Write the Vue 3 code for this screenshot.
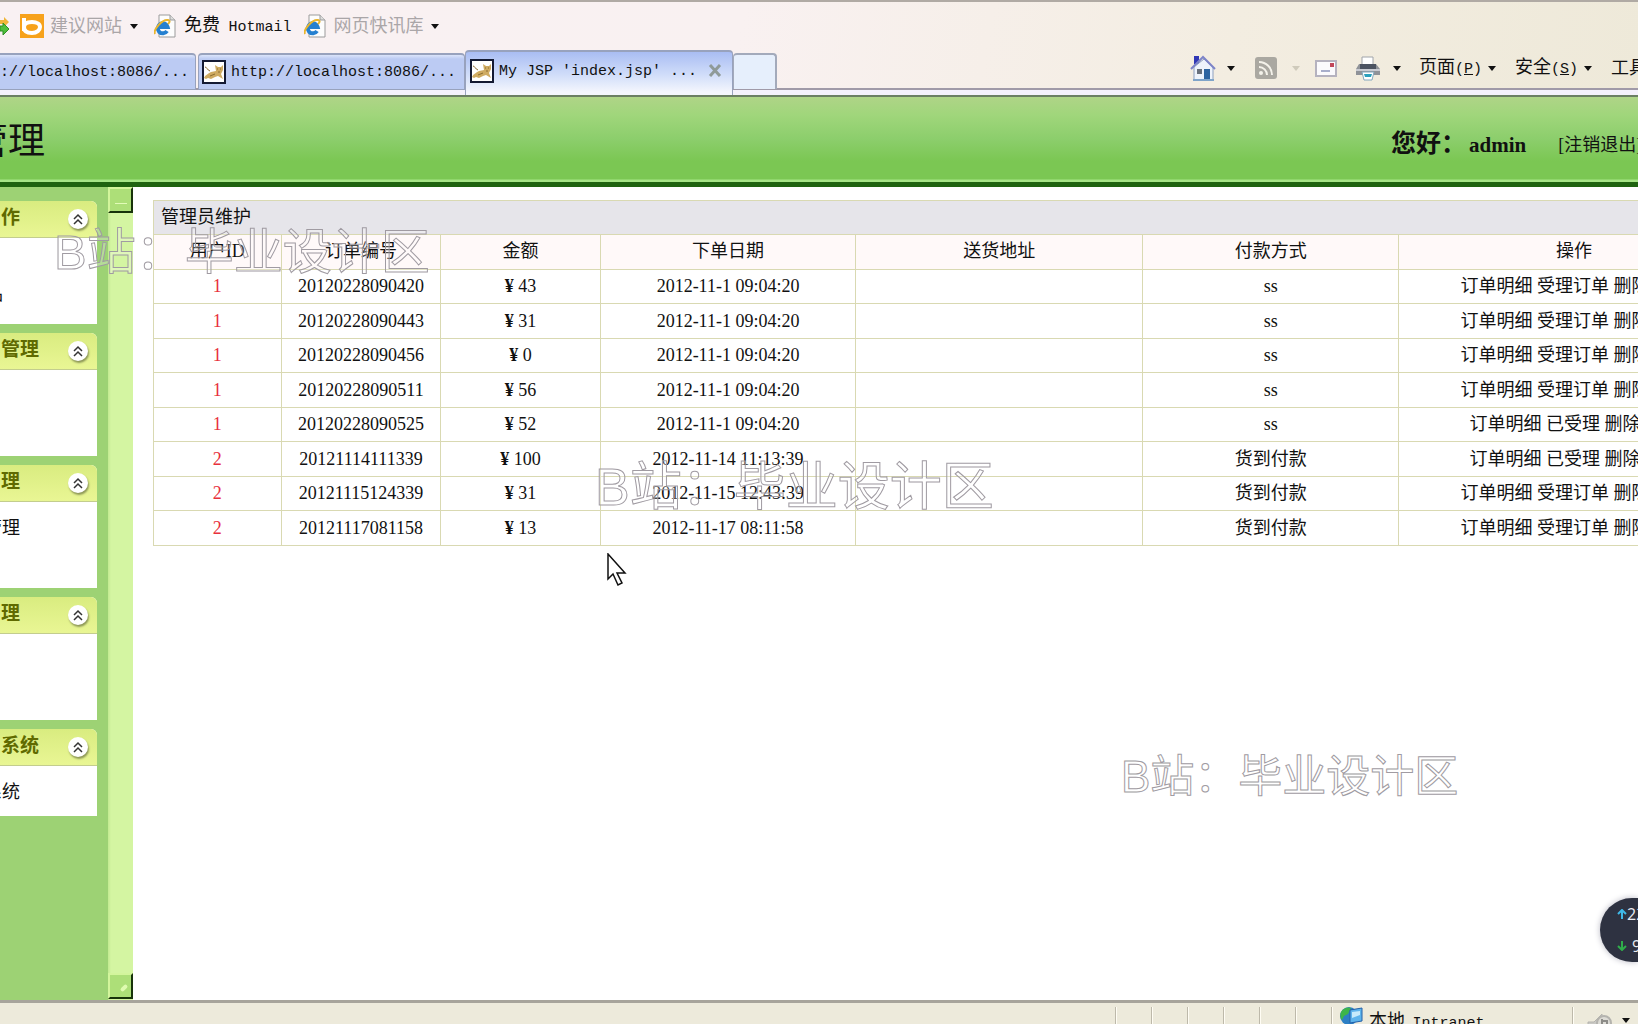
<script setup>
const tabs = [
  { text: '://localhost:8086/...', kind: 'first' },
  { text: 'http://localhost:8086/...', kind: 'second' },
  { text: "My JSP 'index.jsp' ...", kind: 'active' }
]

const panels = [
  { title: '作', item: '品', kind: 'peek' },
  { title: '管理', item: '', kind: '' },
  { title: '理', item: '管理', kind: 'near' },
  { title: '理', item: '', kind: '' },
  { title: '系统', item: '系统', kind: 'near short' }
]

const headings = ['用户ID', '订单编号', '金额', '下单日期', '送货地址', '付款方式', '操作']

const orders = [
  { user: 1, no: '20120228090420', sum: 43, date: '2012-11-1 09:04:20', pay: 'ss', action: '受理订单' },
  { user: 1, no: '20120228090443', sum: 31, date: '2012-11-1 09:04:20', pay: 'ss', action: '受理订单' },
  { user: 1, no: '20120228090456', sum: 0, date: '2012-11-1 09:04:20', pay: 'ss', action: '受理订单' },
  { user: 1, no: '20120228090511', sum: 56, date: '2012-11-1 09:04:20', pay: 'ss', action: '受理订单' },
  { user: 1, no: '20120228090525', sum: 52, date: '2012-11-1 09:04:20', pay: 'ss', action: '已受理' },
  { user: 2, no: '20121114111339', sum: 100, date: '2012-11-14 11:13:39', pay: '货到付款', action: '已受理' },
  { user: 2, no: '20121115124339', sum: 31, date: '2012-11-15 12:43:39', pay: '货到付款', action: '受理订单' },
  { user: 2, no: '20121117081158', sum: 13, date: '2012-11-17 08:11:58', pay: '货到付款', action: '受理订单' }
]
</script>

<template>
  <div class="screen">
    <div class="chrome">
      <nav class="bookmarks">
        <svg class="go" width="9" height="20" viewBox="0 0 9 20">
          <path d="M0 4h4V1l5 5-5 5V8H0z" fill="#f0b63a" />
          <path d="M0 10h3V7l6 6-6 6v-4H0z" fill="#4fbf3c" stroke="#2f8f25" />
        </svg>
        <a href="#" class="mark muted">
          <svg width="24" height="24" viewBox="0 0 24 24">
            <rect width="24" height="24" fill="#f7a21b" />
            <path d="M4 4v13M4 13c0-4 4-5 8-5 5 0 8 2 8 5s-3 6-8 6-8-2-8-6z" fill="none" stroke="#fff" stroke-width="4" stroke-linejoin="round" />
          </svg>
          <span>建议网站</span>
        </a>
        <i class="caret bing-caret"></i>
        <a href="#" class="mark hotmail">
          <svg width="24" height="24" viewBox="0 0 24 24">
            <path d="M5 1h11l5 5v17H5z" fill="#fdfdfd" stroke="#9b9b9b" />
            <path d="M16 1v5h5" fill="#ddd" stroke="#9b9b9b" />
            <path d="M13 17a5 5 0 1 1 .6-4H5" fill="none" stroke="#2580d0" stroke-width="4" />
            <path d="M1 20C-1 16 8 5 14 6c3 1 1 3 0 4" fill="none" stroke="#e9b52e" stroke-width="2" />
          </svg>
          <span>免费 <span class="mono">Hotmail</span></span>
        </a>
        <a href="#" class="mark muted">
          <svg width="24" height="24" viewBox="0 0 24 24">
            <path d="M5 1h11l5 5v17H5z" fill="#fdfdfd" stroke="#9b9b9b" />
            <path d="M16 1v5h5" fill="#ddd" stroke="#9b9b9b" />
            <path d="M13 17a5 5 0 1 1 .6-4H5" fill="none" stroke="#2580d0" stroke-width="4" />
            <path d="M1 20C-1 16 8 5 14 6c3 1 1 3 0 4" fill="none" stroke="#e9b52e" stroke-width="2" />
          </svg>
          <span>网页快讯库</span>
        </a>
        <i class="caret"></i>
      </nav>

      <div class="strip">
        <div class="tabs">
          <div v-for="tab in tabs" :key="tab.text" class="tab" :class="tab.kind">
            <svg v-if="tab.kind !== 'first'" width="24" height="24" viewBox="0 0 24 24">
              <rect x="1" y="1" width="22" height="22" fill="#fff" stroke="#141a33" stroke-width="2" />
              <path d="M2 18c1-3 4-4 7-6l5-1-1-6 3 2h3l2-2v5l-2 4 2 5-5-3-3 1-4 2-3-1-2 1z" fill="#cfab62" />
              <path d="M3 7c2 0 2 3 5 4M15 9h1M18 9h1M8 16l5-2M16 12h2" fill="none" stroke="#8c6c30" />
            </svg>
            <span class="mono">{{ tab.text }}</span>
            <button v-if="tab.kind === 'active'" class="close" aria-label="关闭">
              <svg width="14" height="13" viewBox="0 0 14 13">
                <path d="M2 1l10 11M12 1L2 12" stroke="#8f9a98" stroke-width="3" />
              </svg>
            </button>
          </div>
          <button class="new-tab" aria-label="新选项卡"></button>
        </div>

        <div class="tools">
          <svg width="26" height="26" viewBox="0 0 26 26">
            <path d="M4 1h5v8H4z" fill="#3037b5" />
            <path d="M4 12v13h19V12l-9-8z" fill="#eef3fb" stroke="#8ea0c0" />
            <path d="M1 14L13 2l12 12" fill="none" stroke="#7d84c8" stroke-width="2" />
            <rect x="14" y="14" width="6" height="11" fill="#2d64a0" />
            <rect x="7" y="14" width="5" height="5" fill="#68707c" />
            <path d="M3 25h21" stroke="#7fa4c9" stroke-width="2" />
          </svg>
          <i class="caret home-caret"></i>
          <svg width="22" height="22" viewBox="0 0 22 22">
            <rect width="22" height="22" rx="3" fill="#aaa8a1" />
            <circle cx="6" cy="16" r="2" fill="#f4f2ea" />
            <path d="M4 10a8 8 0 0 1 8 8M4 5a13 13 0 0 1 13 13" fill="none" stroke="#f4f2ea" stroke-width="2" />
          </svg>
          <i class="caret faint"></i>
          <svg class="mail" width="22" height="17" viewBox="0 0 22 17">
            <rect x="1" y="1" width="20" height="15" fill="#fbfafd" stroke="#b5b2bf" stroke-width="2" />
            <rect x="15" y="3" width="4" height="4" fill="#c2475a" />
            <path d="M6 11h9" stroke="#a8aecb" stroke-width="2" />
          </svg>
          <svg width="26" height="26" viewBox="0 0 26 26">
            <path d="M7 2h11v9H7z" fill="#fff" stroke="#a0a4aa" />
            <path d="M4 9h3v2h11V9h3l4 5v6H1v-6z" fill="#8f9298" />
            <path d="M5 9h16v5H5z" fill="#4c5361" />
            <path d="M1 15h24" stroke="#c9cbd2" stroke-width="2" />
            <path d="M7 17h12l-2 8H9z" fill="#fff" stroke="#83a7bd" />
            <path d="M9 19h8l-1 3h-6z" fill="#2aa0bd" />
          </svg>
          <i class="caret print-caret"></i>
          <a href="#">页面<span class="mono">(<u>P</u>)</span></a>
          <i class="caret menu-caret"></i>
          <a href="#">安全<span class="mono">(<u>S</u>)</span></a>
          <i class="caret menu-caret"></i>
          <a href="#">工具</a>
        </div>
      </div>
    </div>

    <header class="banner">
      <h1>管理</h1>
      <div class="account">
        <strong>您好：<span>admin</span></strong>
        <a href="#">[注销退出]</a>
      </div>
    </header>

    <main class="work">
      <aside class="side">
        <section v-for="(panel, i) in panels" :key="i" class="panel" :class="panel.kind">
          <header>
            <h2>{{ panel.title }}</h2>
            <button aria-label="收起">
              <svg width="20" height="20" viewBox="0 0 20 20">
                <path d="M6 10l4-4 4 4M6 15l4-4 4 4" fill="none" stroke="#333" stroke-width="1.5" />
              </svg>
            </button>
          </header>
          <div class="panel-body">
            <a v-if="panel.item" href="#">{{ panel.item }}</a>
          </div>
        </section>
      </aside>

      <div class="scroller">
        <button aria-label="向上滚动"><i class="dash"></i></button>
        <button aria-label="向下滚动"><i class="slash"></i></button>
      </div>

      <div class="content">
        <table>
          <colgroup>
            <col class="c-user" />
            <col class="c-short" />
            <col class="c-short" />
            <col class="c-mid" />
            <col class="c-addr" />
            <col class="c-mid" />
            <col class="c-ops" />
          </colgroup>
          <thead>
            <tr class="caption">
              <th colspan="7">管理员维护</th>
            </tr>
            <tr class="heads">
              <th v-for="h in headings" :key="h">{{ h }}</th>
            </tr>
          </thead>
          <tbody>
            <tr v-for="o in orders" :key="o.no">
              <td class="user">{{ o.user }}</td>
              <td>{{ o.no }}</td>
              <td><b>¥</b> {{ o.sum }}</td>
              <td>{{ o.date }}</td>
              <td></td>
              <td>{{ o.pay }}</td>
              <td class="ops"><a href="#">订单明细</a> <a href="#">{{ o.action }}</a> <a href="#">删除</a></td>
            </tr>
          </tbody>
        </table>
      </div>
    </main>

    <footer class="status">
      <i v-for="n in 6" :key="n" class="cell"></i>
      <div class="zone">
        <svg width="26" height="24" viewBox="0 0 26 24">
          <circle cx="10" cy="9" r="9" fill="#2d7fc4" />
          <path d="M2 5c3-5 8-5 10-4l-3 6-4 2-2 4c-2-2-2-5-1-8z" fill="#3db54a" />
          <path d="M11 3l12-2v13l-12 2z" fill="#5db4ec" stroke="#2560a8" />
          <path d="M13 5l8-1v4l-8 3z" fill="#c6ebfb" />
        </svg>
        <span>本地 <span class="mono">Intranet</span></span>
      </div>
      <div class="sound">
        <svg width="26" height="24" viewBox="0 0 26 24">
          <path d="M1 11h6l8-8v18l-8-5H1z" fill="#c9c8c4" stroke="#b4b3ae" />
          <circle cx="17" cy="12" r="7" fill="#dddcd6" stroke="#b4b3ae" stroke-width="2" />
          <path d="M15 8v7M16 10h4v5" fill="none" stroke="#8d8c88" stroke-width="2" />
        </svg>
        <i class="caret"></i>
      </div>
    </footer>

    <div class="watermark one">B站：毕业设计区</div>
    <div class="watermark two">B站：毕业设计区</div>
    <div class="watermark three">B站：毕业设计区</div>

    <svg class="pointer" width="20" height="34" viewBox="0 0 20 34">
      <path d="M1 1v25l5-5 5 11 4-2-5-10h8z" fill="#fff" stroke="#111" stroke-width="1.5" />
    </svg>

    <div class="speed">
      <div>
        <svg width="10" height="10" viewBox="0 0 10 10"><path d="M5 10V2M1 5l4-4 4 4" fill="none" stroke="#3fb8e8" stroke-width="2" /></svg>
        <span>22</span>
      </div>
      <div class="down">
        <svg width="10" height="10" viewBox="0 0 10 10"><path d="M5 0v8M1 5l4 4 4-4" fill="none" stroke="#2fae4a" stroke-width="2" /></svg>
        <span>9</span>
      </div>
    </div>
  </div>
</template>

<style>
body {
  margin: 0;
  overflow: hidden;
}
</style>

<style scoped>
.screen {
  position: relative;
  display: flex;
  flex-direction: column;
  height: 100vh;
  overflow: hidden;
  font: 18px/24px 'Liberation Serif', 'Noto Sans CJK SC', serif;
  color: #111;
  background: #fff;
}
* {
  box-sizing: border-box;
}
a {
  color: inherit;
  text-decoration: none;
}
button {
  padding: 0;
  border: 0;
  background: none;
}
svg {
  flex: none;
  display: block;
}
.mono {
  font-family: 'Liberation Mono', monospace;
  font-size: 15px;
}
.caret {
  flex: none;
  width: 0;
  height: 0;
  border: 4px solid transparent;
  border-top: 5px solid #111;
  border-bottom: 0;
}

.chrome {
  flex: none;
  border-top: 2px solid #b0aaa4;
  background: linear-gradient(100deg, #f9f1f3 0%, #f9f1f1 45%, #f3ede1 75%, #eee9d9 100%);
}
.bookmarks {
  display: flex;
  align-items: center;
  height: 48px;
}
.go {
  margin-right: 11px;
}
.mark {
  display: flex;
  align-items: center;
  gap: 6px;
  white-space: nowrap;
}
.muted {
  color: #aaa6a8;
}
.bing-caret {
  margin: 0 16px 0 8px;
}
.hotmail {
  margin-right: 12px;
}
.hotmail .mono {
  margin-left: 4px;
}
.mark + .caret:last-child {
  margin-left: 7px;
}

.strip {
  display: flex;
  height: 47px;
  background: linear-gradient(transparent 38px, #a09aa8 38px, #a09aa8 40px, #f4f1fb 40px);
  border-bottom: 2px solid #6b7f63;
}
.tabs {
  display: flex;
  align-items: flex-start;
}
.tab {
  display: flex;
  align-items: center;
  gap: 5px;
  height: 37px;
  margin-top: 3px;
  border: 1px solid #98a2bd;
  border-top: 2px solid #98a2bd;
  border-radius: 4px 4px 0 0;
  background: linear-gradient(#dbe4fa, #bccbf3 4px, #bccbf3);
  white-space: pre;
}
.tab .mono {
  padding-top: 2px;
}
.first {
  width: 196px;
  border-left: 0;
  border-radius: 0 4px 0 0;
}
.second {
  width: 267px;
  margin-left: 2px;
  padding-left: 3px;
}
.active {
  width: 268px;
  height: 45px;
  margin-top: 0;
  padding: 0 10px 6px 4px;
  border-bottom: 0;
  background: linear-gradient(#a9bdf3, #cfdcf9 22px, #f4f6fd 40px);
}
.close {
  margin-left: auto;
}
.new-tab {
  width: 44px;
  height: 36px;
  margin-top: 3px;
  border: 2px solid #a3aabb;
  border-left-width: 1px;
  border-bottom: 0;
  border-radius: 4px 4px 0 0;
  background: #e6effc;
}
.tools {
  display: flex;
  align-items: center;
  width: 448px;
  height: 36px;
  margin-left: auto;
  overflow: hidden;
  white-space: nowrap;
}
.home-caret {
  margin: 0 20px 0 11px;
}
.faint {
  margin: 0 15px 0 15px;
  border-top-color: #cfcabb;
}
.mail {
  margin-right: 18px;
}
.print-caret {
  margin: 0 18px 0 12px;
}
.menu-caret {
  margin: 0 19px 0 6px;
}

.banner {
  flex: none;
  display: flex;
  align-items: center;
  justify-content: space-between;
  height: 90px;
  border-bottom: 5px solid #1f6310;
  background: linear-gradient(#afd487, #a0d67b 18px, #8cce6c 42px, #7bc753 64px, #7bc753 82px, #a6e586 83px);
}
h1 {
  display: flex;
  justify-content: flex-end;
  width: 45px;
  margin: 0;
  padding-top: 5px;
  overflow: hidden;
  font-size: 37px;
  font-weight: 400;
  line-height: 48px;
  white-space: nowrap;
}
.account {
  display: flex;
  align-items: center;
  gap: 32px;
  width: 247px;
  padding-top: 10px;
  overflow: hidden;
  white-space: nowrap;
}
.account strong {
  font-size: 25px;
  line-height: 32px;
}
.account strong span {
  margin-left: 3px;
  font-size: 21px;
}

.work {
  flex: 1;
  display: flex;
  min-height: 0;
}
.side {
  flex: none;
  display: flex;
  flex-direction: column;
  gap: 9px;
  width: 108px;
  padding: 14px 11px 0 0;
  background: #9dd274;
}
.panel header {
  display: flex;
  align-items: center;
  justify-content: space-between;
  height: 37px;
  padding: 0 9px 0 1px;
  border-bottom: 1px solid #c3cd8e;
  background: linear-gradient(#d9ec80, #e9f694);
}
h2 {
  margin: 0 0 3px;
  font-size: 19px;
  color: #5f6a00;
}
.panel button {
  border-radius: 50%;
  background: #fff;
  box-shadow: 1px 2px 2px #8d9757;
}
.panel-body {
  display: flex;
  justify-content: flex-end;
  width: 20px;
  height: 86px;
  padding-top: 14px;
  overflow: hidden;
  white-space: nowrap;
}
.panel {
  overflow: hidden;
  border-radius: 0 6px 0 0;
  background: #fff;
}
.peek .panel-body {
  width: 3px;
  padding-top: 44px;
}
.short .panel-body {
  height: 50px;
}

.scroller {
  flex: none;
  display: flex;
  flex-direction: column;
  justify-content: space-between;
  width: 25px;
  padding-bottom: 1px;
  background: linear-gradient(90deg, #c2ea90, #d4f5a2 3px);
}
.scroller button {
  display: flex;
  align-items: center;
  justify-content: center;
  height: 26px;
  border: 2px solid #17330a;
  border-top-color: #d3f59c;
  border-left-color: #d3f59c;
  background: #addf78;
}
.dash {
  width: 12px;
  height: 1px;
  margin-top: 6px;
  background: #e2fbb8;
}
.slash {
  width: 8px;
  height: 4px;
  margin: 4px 0 0 6px;
  border-radius: 2px;
  background: #dffbb0;
  transform: rotate(-45deg);
}

.content {
  flex: 1;
  min-width: 0;
  padding: 13px 0 0 20px;
  overflow: hidden;
}
table {
  width: calc(100% + 112px);
  border-collapse: collapse;
  table-layout: fixed;
}
.c-user {
  width: 8%;
}
.c-short {
  width: 10%;
}
.c-mid {
  width: 16%;
}
.c-addr {
  width: 18%;
}
.c-ops {
  width: 22%;
}
th,
td {
  height: 35px;
  padding: 0 0 1px;
  border: 1px solid #d9d9b2;
  font-weight: 400;
  text-align: center;
  white-space: nowrap;
}
tbody tr:nth-child(odd) td {
  height: 34px;
}
.caption th {
  height: 34px;
  padding-left: 7px;
  background: #e6e5ea;
  text-align: left;
}
.heads th {
  padding-bottom: 2px;
  background: #fff9f9;
}
.user {
  color: #e8303c;
}
td.ops {
  padding-right: 38px;
}

.status {
  flex: none;
  display: flex;
  justify-content: flex-end;
  height: 24px;
  padding-top: 4px;
  overflow: hidden;
  border-top: 3px solid #a7a49b;
  background: #edeadb;
  white-space: nowrap;
}
.cell,
.zone,
.sound {
  flex: none;
  width: 36px;
  height: 28px;
  border-left: 1px solid #bdb9aa;
  box-shadow: inset 1px 0 #fffdf4;
}
.zone {
  display: flex;
  width: 241px;
  gap: 4px;
  padding-left: 7px;
}
.zone span {
  line-height: 28px;
}
.zone .mono {
  margin-left: 3px;
}
.sound {
  display: flex;
  width: 66px;
  gap: 9px;
  padding: 4px 0 0 14px;
}
.sound .caret {
  margin-top: 7px;
}

.watermark {
  position: absolute;
  font-family: 'Liberation Sans', 'Noto Sans CJK SC', sans-serif;
  line-height: 60px;
  color: rgba(255, 255, 255, 0.25);
  -webkit-text-stroke: 1px #a09ba2;
  white-space: nowrap;
  pointer-events: none;
}
.one {
  left: 54px;
  top: 222px;
  font-size: 49px;
}
.two {
  left: 595px;
  top: 457px;
  font-size: 52px;
}
.three {
  left: 1121px;
  top: 747px;
  font-size: 44px;
}
.pointer {
  position: absolute;
  left: 607px;
  top: 553px;
}
.speed {
  position: absolute;
  right: 0;
  bottom: 62px;
  display: flex;
  flex-direction: column;
  justify-content: space-around;
  width: 38px;
  height: 64px;
  padding-left: 17px;
  border-radius: 32px 0 0 32px;
  overflow: hidden;
  background: #2e3241;
  color: #e8ebf2;
  font: 16px/24px 'Open Sans', sans-serif;
  box-shadow: 0 0 6px #b9b9c4;
}
.speed div {
  display: flex;
  align-items: center;
  white-space: nowrap;
}
.speed .down {
  gap: 5px;
}
</style>
